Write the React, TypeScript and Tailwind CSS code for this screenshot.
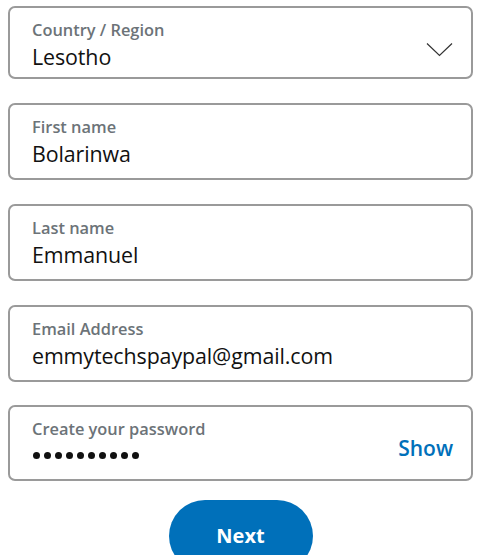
import { useState } from 'react';

const FONT = { fontFamily: '"Open Sans", "Noto Sans", sans-serif' };

function Field({ label, value, height, mt, right }: { label: string; value: string; height: string; mt: string; right?: React.ReactNode }) {
  return (
    <div className={`relative rounded-[7px] border-2 border-[#9a9a9a] bg-white ${height} ${mt}`}>
      <div className="pl-[22px] pt-[11px]">
        <div className="text-[16.4px] font-semibold leading-[22px] text-[#6c7378]">{label}</div>
        <div className="mt-[2px] text-[21.4px] leading-[28px] tracking-[-0.1px] text-[#111]">{value}</div>
      </div>
      {right}
    </div>
  );
}

export default function App() {
  const [show, setShow] = useState(false);
  return (
    <div className="min-h-[555px] overflow-hidden bg-white pl-2 pr-[7px] pt-[6px]" style={FONT}>
      <Field
        label="Country / Region"
        value="Lesotho"
        height="h-[73px]"
        mt="mt-0"
        right={
          <svg className="absolute right-[18px] top-[34px]" width="27" height="15" viewBox="0 0 27 15" fill="none">
            <polyline points="1,1.5 13.5,13.5 26,1.5" stroke="#333" strokeWidth="1.2" />
          </svg>
        }
      />
      <Field label="First name" value="Bolarinwa" height="h-[77px]" mt="mt-6" />
      <Field label="Last name" value="Emmanuel" height="h-[77px]" mt="mt-6" />
      <Field label="Email Address" value="emmytechspaypal@gmail.com" height="h-[77px]" mt="mt-6" />
      <Field
        label="Create your password"
        value={show ? 'password123' : ''}
        height="h-[76px]"
        mt="mt-[23px]"
        right={
          <>
            {!show && (
              <div className="absolute left-[23px] top-[45px] flex gap-[4px]">
                {Array.from({ length: 10 }).map((_, i) => (
                  <span key={i} className="block h-[7px] w-[7px] rounded-full bg-[#111]" />
                ))}
              </div>
            )}
            <button
              onClick={() => setShow(s => !s)}
              className="absolute right-[18px] top-[27px] text-[21px] font-semibold leading-[28px] text-[#0070ba]"
            >
              Show
            </button>
          </>
        }
      />
      <div className="mt-[19px] flex justify-center">
        <button className="h-[72px] w-[144px] rounded-full bg-[#0070ba] pb-[1px] text-[20px] font-bold text-white">
          Next
        </button>
      </div>
    </div>
  );
}
